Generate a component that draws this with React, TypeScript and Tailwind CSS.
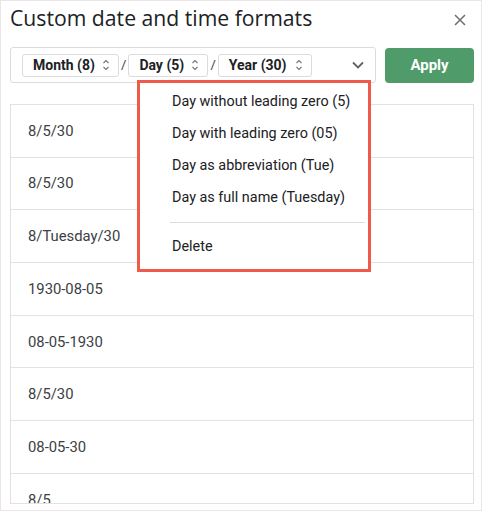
import React from "react";

const rows = [
  "8/5/30",
  "8/5/30",
  "8/Tuesday/30",
  "1930-08-05",
  "08-05-1930",
  "8/5/30",
  "08-05-30",
  "8/5",
];

const menuItems = [
  "Day without leading zero (5)",
  "Day with leading zero (05)",
  "Day as abbreviation (Tue)",
  "Day as full name (Tuesday)",
];

const SortArrows = () => (
  <svg width="8" height="14" viewBox="0 0 8 14" className="ml-[7px]">
    <path d="M1.5 5 L4 2.5 L6.5 5" fill="none" stroke="#70757a" strokeWidth="1.1" />
    <path d="M1.5 9 L4 11.5 L6.5 9" fill="none" stroke="#70757a" strokeWidth="1.1" />
  </svg>
);

const Chip = ({ label, width }: { label: string; width: string }) => (
  <div
    className={`flex items-center justify-between h-[23px] pl-[10px] pr-[8px] border border-[#dadce0] rounded-[3px] ${width}`}
  >
    <span className="text-[14px] font-bold text-[#202124]">{label}</span>
    <SortArrows />
  </div>
);

const Slash = () => <span className="mx-[2px] text-[13px] text-[#3c4043]">/</span>;

export default function App() {
  return (
    <div
      className="relative w-[482px] h-[511px] overflow-hidden bg-white border border-[#ece4e7]"
      style={{ fontFamily: "Roboto, 'Liberation Sans', sans-serif" }}
    >
      <div className="flex items-start justify-between pl-[9px] pr-[15px] pt-[3px]">
        <h1 className="text-[21.2px] leading-[28px] text-[#202124]" style={{ fontFamily: "'Open Sans', Roboto, sans-serif" }}>
          Custom date and time formats
        </h1>
        <svg width="12" height="12" viewBox="0 0 12 12" className="mt-[10px]">
          <path d="M1 1 L11 11 M11 1 L1 11" stroke="#6f7377" strokeWidth="1.6" />
        </svg>
      </div>

      <div className="flex items-center gap-[9px] pl-[9px] mt-[15px]">
        <div className="flex items-center w-[366px] h-[36px] pl-[11px] pr-[11px] border border-[#dadce0] rounded-[3px]">
          <Chip label="Month (8)" width="w-[97px]" />
          <Slash />
          <Chip label="Day (5)" width="w-[80px]" />
          <Slash />
          <Chip label="Year (30)" width="w-[94px]" />
          <div className="flex-1" />
          <svg width="12" height="8" viewBox="0 0 12 8">
            <path d="M1 1.5 L6 6.5 L11 1.5" fill="none" stroke="#5f6368" strokeWidth="1.8" />
          </svg>
        </div>
        <button className="w-[89px] h-[35px] rounded-[4px] bg-[#4f9b69] text-white text-[15px] font-bold">
          Apply
        </button>
      </div>

      <div className="mt-[21px] ml-[9px] w-[464px] h-[400px] overflow-hidden border border-[#e2e2e2]">
        {rows.map((r, i) => (
          <div
            key={i}
            className="flex items-center h-[52.7px] pl-[17px] border-b border-[#e2e2e2] text-[14.8px] text-[#3c4043]"
          >
            {r}
          </div>
        ))}
      </div>

      <div className="absolute left-[136px] top-[79px] w-[234px] h-[192px] bg-white border-[3px] border-[#f05a4d]">
        <div className="pt-[3px]">
          {menuItems.map((m) => (
            <div key={m} className="h-[32px] flex items-center pl-[32px] text-[14.4px] text-[#202124]">
              {m}
            </div>
          ))}
          <div className="ml-[30px] mr-[3px] my-[8px] border-t border-[#dadce0]" />
          <div className="h-[32px] flex items-center pl-[32px] text-[14.4px] text-[#202124]">Delete</div>
        </div>
      </div>
    </div>
  );
}
